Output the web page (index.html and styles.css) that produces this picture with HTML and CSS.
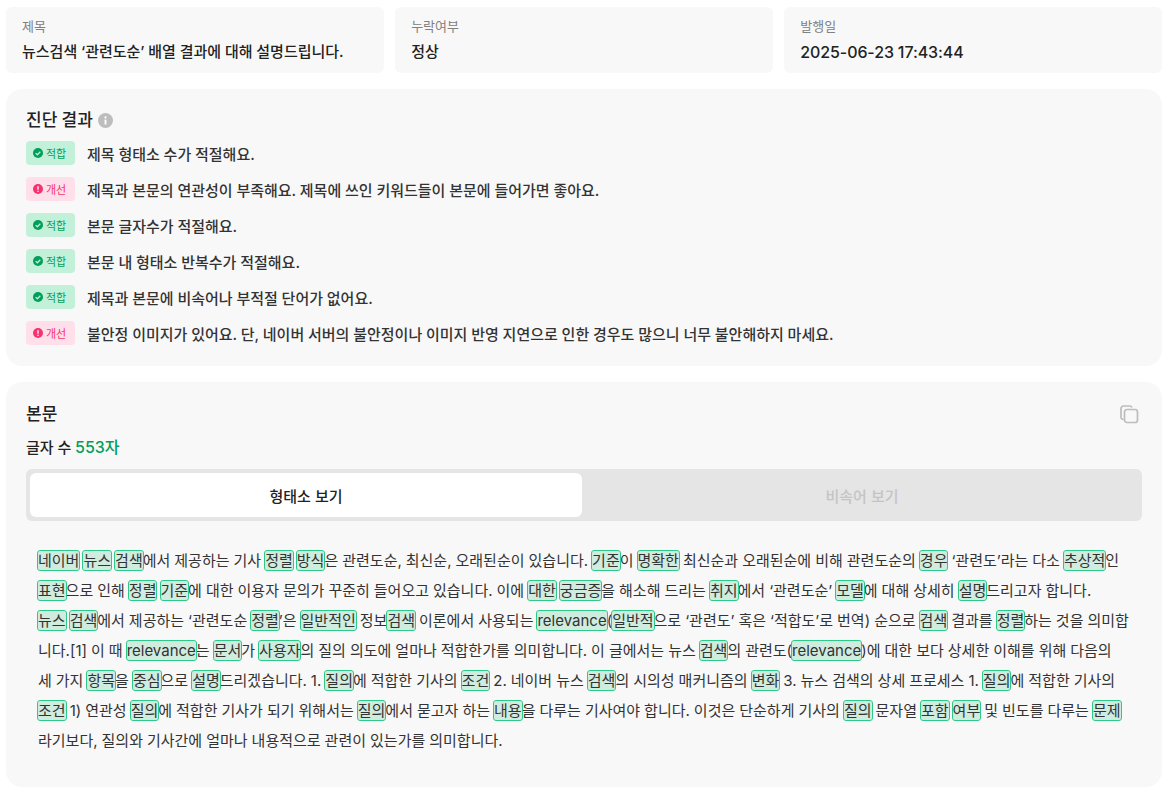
FILE: index.html
```html
<!DOCTYPE html>
<html lang="ko">

<head>
    <meta charset="UTF-8">
    <meta name="viewport" content="width=device-width, initial-scale=1.0">
    <title>진단 결과</title>
    <link rel="stylesheet" href="styles.css">
</head>

<body>
    <div class="meta-row">
        <div class="meta-card">
            <p class="meta-label">제목</p>
            <p class="meta-value">뉴스검색 ‘관련도순’ 배열 결과에 대해 설명드립니다.</p>
        </div>
        <div class="meta-card">
            <p class="meta-label">누락여부</p>
            <p class="meta-value">정상</p>
        </div>
        <div class="meta-card">
            <p class="meta-label">발행일</p>
            <p class="meta-value meta-date">2025-06-23 17:43:44</p>
        </div>
    </div>

    <section class="panel result-panel">
        <h2 class="panel-title">진단 결과
            <svg class="info-icon" viewBox="0 0 16 16" width="15" height="15">
                <circle cx="8" cy="8" r="8" fill="#bdbdbd" />
                <circle cx="8" cy="4.7" r="1.2" fill="#fff" />
                <rect x="7" y="6.9" width="2" height="5.3" rx="0.6" fill="#fff" />
            </svg>
        </h2>
        <ul class="result-list">
            <li class="result-item">
                <span class="badge badge-good">
                    <svg viewBox="0 0 12 12" width="10" height="10">
                        <circle cx="6" cy="6" r="6" fill="#00a05b" />
                        <path d="M3.2 6.1l2 2 3.600-3.600" fill="none" stroke="#c3f0d9" stroke-width="1.500" />
                    </svg>
                    적합
                </span>
                <span>제목 형태소 수가 적절해요.</span>
            </li>
            <li class="result-item">
                <span class="badge badge-bad">
                    <svg viewBox="0 0 12 12" width="10" height="10">
                        <circle cx="6" cy="6" r="6" fill="#f5346f" />
                        <rect x="5.100" y="2.400" width="1.800" height="4.500" rx="0.500" fill="#ffdfe9" />
                        <circle cx="6" cy="8.700" r="1" fill="#ffdfe9" />
                    </svg>
                    개선
                </span>
                <span>제목과 본문의 연관성이 부족해요. 제목에 쓰인 키워드들이 본문에 들어가면 좋아요.</span>
            </li>
            <li class="result-item">
                <span class="badge badge-good">
                    <svg viewBox="0 0 12 12" width="10" height="10">
                        <circle cx="6" cy="6" r="6" fill="#00a05b" />
                        <path d="M3.2 6.1l2 2 3.600-3.600" fill="none" stroke="#c3f0d9" stroke-width="1.500" />
                    </svg>
                    적합
                </span>
                <span>본문 글자수가 적절해요.</span>
            </li>
            <li class="result-item">
                <span class="badge badge-good">
                    <svg viewBox="0 0 12 12" width="10" height="10">
                        <circle cx="6" cy="6" r="6" fill="#00a05b" />
                        <path d="M3.2 6.1l2 2 3.600-3.600" fill="none" stroke="#c3f0d9" stroke-width="1.500" />
                    </svg>
                    적합
                </span>
                <span>본문 내 형태소 반복수가 적절해요.</span>
            </li>
            <li class="result-item">
                <span class="badge badge-good">
                    <svg viewBox="0 0 12 12" width="10" height="10">
                        <circle cx="6" cy="6" r="6" fill="#00a05b" />
                        <path d="M3.2 6.1l2 2 3.600-3.600" fill="none" stroke="#c3f0d9" stroke-width="1.500" />
                    </svg>
                    적합
                </span>
                <span>제목과 본문에 비속어나 부적절 단어가 없어요.</span>
            </li>
            <li class="result-item">
                <span class="badge badge-bad">
                    <svg viewBox="0 0 12 12" width="10" height="10">
                        <circle cx="6" cy="6" r="6" fill="#f5346f" />
                        <rect x="5.100" y="2.400" width="1.800" height="4.500" rx="0.500" fill="#ffdfe9" />
                        <circle cx="6" cy="8.700" r="1" fill="#ffdfe9" />
                    </svg>
                    개선
                </span>
                <span>불안정 이미지가 있어요. 단, 네이버 서버의 불안정이나 이미지 반영 지연으로 인한 경우도 많으니 너무 불안해하지 마세요.</span>
            </li>
        </ul>
    </section>

    <section class="panel body-panel">
        <div class="body-head">
            <h2 class="panel-title">본문</h2>
            <svg class="copy-icon" viewBox="0 0 20 20" width="20" height="20" fill="none" stroke="#bdbdbd" stroke-width="1.700">
                <path d="M4.500 15.200a2 2 0 0 1-2.500-2V4.500a2.500 2.500 0 0 1 2.500-2.500h6.300a2.500 2.500 0 0 1 2.200 1.500" />
                <rect x="5.500" y="5.500" width="13" height="13" rx="2.500" />
            </svg>
        </div>
        <p class="char-count">글자 수 <span class="char-num">553자</span></p>
        <div class="tabs">
            <button class="tab tab-active">형태소 보기</button>
            <button class="tab">비속어 보기</button>
        </div>
        <p class="article">
            <mark>네이버</mark> <mark>뉴스</mark> <mark>검색</mark>에서 제공하는 기사 <mark>정렬</mark> <mark>방식</mark>은 관련도순, 최신순, 오래된순이 있습니다. <mark>기준</mark>이 <mark>명확한</mark> 최신순과 오래된순에 비해 관련도순의 <mark>경우</mark> ‘관련도’라는 다소 <mark>추상적</mark>인 <mark>표현</mark>으로 인해 <mark>정렬</mark> <mark>기준</mark>에 대한 이용자 문의가 꾸준히 들어오고 있습니다. 이에 <mark>대한</mark> <mark>궁금증</mark>을 해소해 드리는 <mark>취지</mark>에서 ‘관련도순’ <mark>모델</mark>에 대해 상세히 <mark>설명</mark>드리고자 합니다.<br>
            <mark>뉴스</mark> <mark>검색</mark>에서 제공하는 ‘관련도순 <mark>정렬</mark>’은 <mark>일반적인</mark> 정보<mark>검색</mark> 이론에서 사용되는 <mark>relevance</mark>(<mark>일반적</mark>으로 ‘관련도’ 혹은 ‘적합도’로 번역) 순으로 <mark>검색</mark> 결과를 <mark>정렬</mark>하는 것을 의미합니다.[1] 이 때 <mark>relevance</mark>는 <mark>문서</mark>가 <mark>사용자</mark>의 질의 의도에 얼마나 적합한가를 의미합니다. 이 글에서는 뉴스 <mark>검색</mark>의 관련도(<mark>relevance</mark>)에 대한 보다 상세한 이해를 위해 다음의<br>
            세 가지 <mark>항목</mark>을 <mark>중심</mark>으로 <mark>설명</mark>드리겠습니다. 1. <mark>질의</mark>에 적합한 기사의 <mark>조건</mark> 2. 네이버 뉴스 <mark>검색</mark>의 시의성 매커니즘의 <mark>변화</mark> 3. 뉴스 검색의 상세 프로세스 1. <mark>질의</mark>에 적합한 기사의 <mark>조건</mark> 1) 연관성 <mark>질의</mark>에 적합한 기사가 되기 위해서는 <mark>질의</mark>에서 묻고자 하는 <mark>내용</mark>을 다루는 기사여야 합니다. 이것은 단순하게 기사의 <mark>질의</mark> 문자열 <mark>포함</mark> <mark>여부</mark> 및 빈도를 다루는 <mark>문제</mark>라기보다, 질의와 기사간에 얼마나 내용적으로 관련이 있는가를 의미합니다.
        </p>
    </section>
</body>

</html>
```

FILE: styles.css
```css
* {
    margin: 0;
    padding: 0;
    box-sizing: border-box;
}

body {
    width: 100%;
    padding: 7px 6px 0;
    background: #fff;
    color: #222;
    font-family: Inter, "Noto Sans CJK KR", "Noto Sans", sans-serif;
    word-spacing: -0.2px;
}

.meta-row {
    display: grid;
    grid-template-columns: repeat(3, 1fr);
    gap: 11.500px;
}

.meta-card {
    height: 66px;
    padding: 10px 16px;
    background: #f8f8f8;
    border-radius: 6px;
}

.meta-label {
    font-size: 13px;
    line-height: 18px;
    color: #808080;
}

.meta-value {
    margin-top: 6px;
    font-size: 15px;
    line-height: 22px;
    font-weight: 500;
    color: #222;
}

.meta-date {
    font-size: 16px;
    letter-spacing: -0.1px;
}

.panel {
    background: #f8f8f8;
    border-radius: 16px;
    padding: 20px;
}

.result-panel {
    height: 277px;
    margin-top: 16px;
    padding-top: 21px;
}

.panel-title {
    display: flex;
    align-items: center;
    gap: 5px;
    font-size: 17px;
    line-height: 20px;
    font-weight: 500;
    color: #222;
}

.result-list {
    list-style: none;
    margin-top: 5px;
}

.result-item {
    display: flex;
    align-items: center;
    gap: 12px;
    height: 36px;
    font-size: 15px;
    font-weight: 500;
    color: #333;
}

.badge {
    display: flex;
    align-items: center;
    gap: 3px;
    width: 49px;
    height: 24px;
    padding-left: 7px;
    border-radius: 4px;
    font-size: 11px;
    font-weight: 400;
}

.badge-good {
    background: #c3f0d9;
    color: #00a05b;
}

.badge-bad {
    background: #ffdfe9;
    color: #f5346f;
}

.body-panel {
    height: 405px;
    margin-top: 16px;
    padding-top: 22px;
}

.body-head {
    display: flex;
    justify-content: space-between;
    align-items: center;
}

.copy-icon {
    margin-right: 3px;
}

.char-count {
    margin-top: 12px;
    font-size: 15px;
    line-height: 22px;
    font-weight: 500;
}

.char-num {
    font-size: 16px;
    color: #00a05b;
}

.tabs {
    display: flex;
    gap: 4px;
    margin-top: 10px;
    padding: 4px;
    height: 52px;
    background: #e5e5e5;
    border-radius: 6px;
}

.tab {
    flex: 1;
    border: none;
    border-radius: 6px;
    background: none;
    font-family: inherit;
    font-size: 15px;
    font-weight: 500;
    color: #c4c4c4;
}

.tab-active {
    background: #fff;
    color: #222;
}

.article {
    margin-top: 25px;
    padding: 0 12px;
    font-size: 15px;
    line-height: 30px;
    color: #333;
}

mark {
    background: #d0ecdf;
    color: inherit;
    outline: 1px solid #2cc98b;
    border-radius: 2px;
}
```
